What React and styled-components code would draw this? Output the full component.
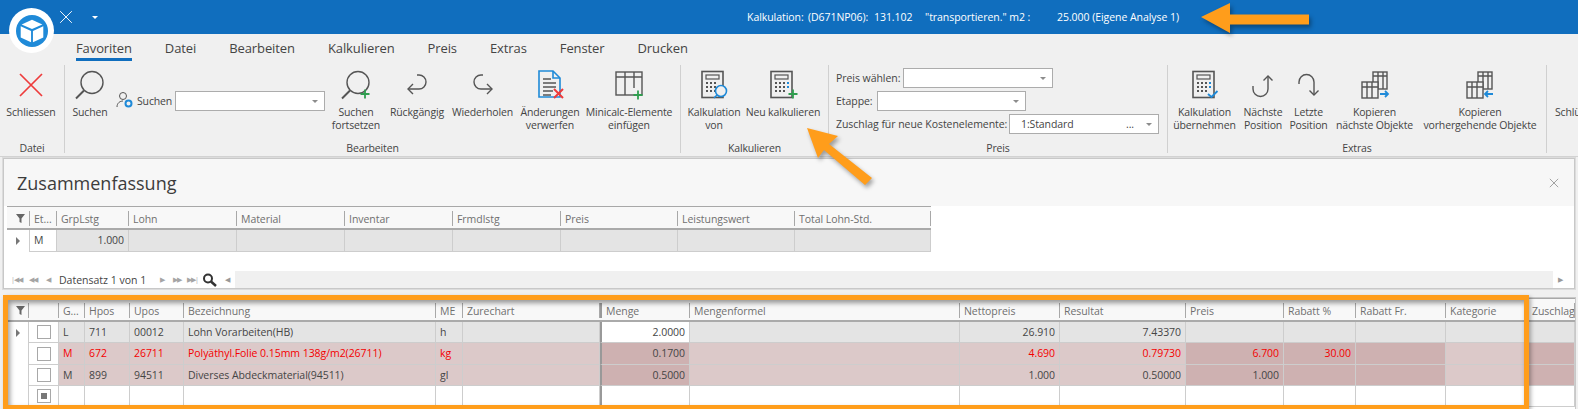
import styled, { createGlobalStyle } from "styled-components";

const GlobalStyle = createGlobalStyle`
  html, body {
    margin: 0;
    padding: 0;
    background: #f0f0f0;
    overflow: hidden;
  }
  * { box-sizing: border-box; }
`;

const blue = "#106ebe";
const iconBlue = "#1f8ad8";
const grey = "#555555";
const green = "#2f9e4f";
const red = "#ee3b3b";
const font = `"Open Sans", "Noto Sans", sans-serif`;

const Page = styled.div`
  position: relative;
  width: 1578px;
  height: 409px;
  overflow: hidden;
  font-family: ${font};
  color: #444;
  background: #f0f0f0;
`;

const TitleBar = styled.div`
  height: 34px;
  background: ${blue};
  display: flex;
  align-items: center;
  color: #fff;
  padding-left: 59px;
`;

const QuickButton = styled.div`
  width: ${(p) => p.$w}px;
  display: flex;
  align-items: center;
`;

const TitleInfo = styled.div`
  margin-left: 645px;
  display: flex;
  font-size: 10.5px;
  letter-spacing: -0.05px;
  white-space: pre;
`;

const TitleText = styled.span`
  width: ${(p) => p.$w}px;
`;

const LogoCircle = styled.div`
  position: absolute;
  left: 9px;
  top: 8px;
  width: 45px;
  height: 45px;
  border-radius: 50%;
  background: #fff;
  display: flex;
  align-items: center;
  justify-content: center;
`;

const Tabs = styled.div`
  height: 28px;
  display: flex;
  gap: 33px;
  padding-left: 76px;
  font-size: 13px;
  letter-spacing: -0.1px;
`;

const Tab = styled.div`
  height: 27px;
  padding-top: 5px;
  line-height: 18px;
  border-bottom: ${(p) => (p.$active ? `3px solid ${blue}` : "none")};
`;

const Ribbon = styled.div`
  height: 95px;
  padding: 3px 0;
  display: flex;
  border-bottom: 1px solid #d2d2d2;
`;

const Group = styled.div`
  width: ${(p) => p.$w}px;
  flex: none;
  display: flex;
  flex-direction: column;
  border-right: ${(p) => (p.$last ? "none" : "1px solid #d0d0d0")};
`;

const GroupBody = styled.div`
  flex: 1;
  display: flex;
`;

const GroupLabel = styled.div`
  height: 15px;
  margin-bottom: -3px;
  line-height: 14px;
  text-align: center;
  font-size: 10.5px;
  letter-spacing: -0.15px;
  white-space: nowrap;
`;

const LargeButton = styled.div`
  width: ${(p) => p.$w}px;
  flex: none;
  padding-top: 5px;
  display: flex;
  flex-direction: column;
  align-items: center;
  font-size: 10.5px;
  letter-spacing: -0.15px;
  line-height: 13.4px;
  text-align: center;
  white-space: pre;
`;

const ClippedButton = styled(LargeButton)`
  align-items: flex-start;
  padding-left: 8px;
  overflow: hidden;
`;

const IconBox = styled.div`
  height: 30px;
  margin-bottom: 6px;
  display: flex;
  align-items: center;
  justify-content: center;
`;

const SearchStack = styled.div`
  width: 212px;
  flex: none;
  padding: 26px 0 0 1px;
  display: flex;
  align-items: flex-start;
  font-size: 10.5px;
  letter-spacing: -0.15px;
`;

const SearchLabel = styled.span`
  width: 37.5px;
  margin: 3px 0 0 3px;
`;

const Combo = styled.div`
  width: ${(p) => p.$w}px;
  height: 20px;
  flex: none;
  background: #fff;
  border: 1px solid #acacac;
  display: flex;
  align-items: center;
  justify-content: flex-end;
  padding: 0 6px;
  font-size: 10.5px;
  letter-spacing: -0.1px;
`;

const ComboValue = styled.span`
  flex: 1;
  padding-left: 5px;
`;

const ComboDots = styled.span`
  margin-right: 12px;
`;

const Caret = styled.span`
  width: 0;
  height: 0;
  border-left: 3px solid transparent;
  border-right: 3px solid transparent;
  border-top: 3px solid #8c8c8c;
`;

const FormStack = styled.div`
  padding: 3px 0 0 7px;
  display: flex;
  flex-direction: column;
  gap: 3px;
  font-size: 10.5px;
  letter-spacing: -0.05px;
`;

const FormRow = styled.div`
  height: 20px;
  display: flex;
  align-items: center;
`;

const FormLabel = styled.span`
  width: ${(p) => p.$w}px;
  flex: none;
  white-space: nowrap;
`;

const Panel = styled.div`
  margin: 1px 3px 0 3px;
  height: 131px;
  background: #fff;
  border: 1px solid #c8c8c8;
  outline: 1px solid #dcdcdc;
`;

const PanelHead = styled.div`
  height: 47px;
  background: #f7f7f7;
  display: flex;
  align-items: center;
  justify-content: space-between;
  padding: 0 15px 0 13px;
  font-size: 18px;
  color: #3c3c3c;
`;

const GridWrap = styled.div`
  margin-left: ${(p) => p.$left}px;
  width: ${(p) => p.$w}px;
`;

const GridRow = styled.div`
  display: grid;
  grid-template-columns: ${(p) => p.$cols};
  height: ${(p) => p.$h}px;
  font-size: 10.5px;
  letter-spacing: -0.05px;
`;

const HeaderRow = styled(GridRow)`
  background: #f8f8f8;
  border-top: 1px solid #a8a8a8;
  border-bottom: 2px solid #aaaaaa;
  padding-top: 2px;
  color: #6f6f6f;
`;

const HeaderCell = styled.div`
  margin: 2px 0;
  padding-left: 4px;
  line-height: 16px;
  border-right: 1px solid #a8a8a8;
  border-left: ${(p) => (p.$thick ? "2px solid #999" : "none")};
  overflow: hidden;
  white-space: nowrap;
  display: flex;
  align-items: center;
  justify-content: ${(p) => (p.$center ? "center" : "flex-start")};
`;

const rowColors = {
  white: "#ffffff",
  grey: "#e4e4e4",
  pink: "#dcc9c9",
  dark: "#ceb1b1",
};

const Cell = styled.div`
  background: ${(p) => rowColors[p.$tone || "white"]};
  color: ${(p) => (p.$red ? "#f40000" : "#454545")};
  text-align: ${(p) => (p.$right ? "right" : "left")};
  padding: 0 4px;
  line-height: ${(p) => p.$h}px;
  border-right: 1px solid #cdcdcd;
  border-bottom: 1px solid #cdcdcd;
  border-left: ${(p) => (p.$thick ? "2px solid #999" : "none")};
  white-space: nowrap;
  overflow: hidden;
`;

const MarkerCell = styled.div`
  display: flex;
  align-items: center;
  justify-content: center;
  border-bottom: ${(p) => (p.$plain ? "none" : "1px solid #cdcdcd")};
  border-right: 1px solid #cdcdcd;
  background: #fff;
`;

const RowArrow = styled.span`
  width: 0;
  height: 0;
  border-top: 4px solid transparent;
  border-bottom: 4px solid transparent;
  border-left: 4px solid #777;
`;

const CheckBox = styled.span`
  width: 14px;
  height: 14px;
  border: 1px solid #a8a8a8;
  background: #fff;
  display: flex;
  align-items: center;
  justify-content: center;
`;

const CheckDot = styled.span`
  width: 6px;
  height: 6px;
  background: #777;
`;

const SummaryBlank = styled.div`
  height: 19px;
`;

const NavBar = styled.div`
  height: 17px;
  display: flex;
  align-items: center;
  padding-left: 7px;
  font-size: 10.5px;
`;

const NavGlyph = styled.span`
  width: ${(p) => p.$w}px;
  font-size: 7px;
  color: #a5a5a5;
  letter-spacing: -1px;
`;

const NavText = styled.span`
  width: 101px;
`;

const ScrollBar = styled.div`
  flex: 1;
  height: 17px;
  margin: 0 6px 0 3px;
  background: #f0f0f0;
  display: flex;
  justify-content: space-between;
`;

const ScrollEnd = styled.span`
  width: 15px;
  background: #fff;
  color: #999;
  font-size: 7px;
  line-height: 17px;
  text-align: center;
`;

const MainGrid = styled.div`
  margin: 9px 0 0 8px;
  width: 1567px;
  height: 112px;
  background: #fff;
  outline: 1px solid #c8c8c8;
`;

const OrangeFrame = styled.div`
  position: absolute;
  left: 3px;
  top: 295px;
  width: 1526px;
  height: 115px;
  border: 5.5px solid #ff9d1b;
  box-shadow: 2px 2px 4px rgba(0, 0, 0, 0.3), inset 2px 3px 5px rgba(0, 0, 0, 0.4);
  pointer-events: none;
`;

const ArrowSvg = styled.svg`
  position: absolute;
  left: ${(p) => p.$x}px;
  top: ${(p) => p.$y}px;
  filter: drop-shadow(2px 3px 2px rgba(0, 0, 0, 0.35));
`;

const Stroke = ({ children }) => (
  <svg width="30" height="30" viewBox="0 0 30 30" fill="none" stroke={grey} strokeWidth="1.4">
    {children}
  </svg>
);

const Plus = ({ x, y, color = green }) => (
  <path d={`M${x - 4.5} ${y}h9M${x} ${y - 4.5}v9`} stroke={color} strokeWidth="1.8" />
);

const CloseIcon = () => (
  <Stroke>
    <path d="M4 4L26 26M26 4L4 26" stroke={red} strokeWidth="1.7" />
  </Stroke>
);

const SearchIcon = ({ plus }) => (
  <Stroke>
    <circle cx="17" cy="12.500" r="11" />
    <path d="M9 20.500L1 28.500" strokeWidth="1.9" />
    {plus && <Plus x={24} y={24} />}
  </Stroke>
);

const UndoIcon = () => (
  <Stroke>
    <path d="M15 5h2a7 7 0 0 1 0 14H6" />
    <path d="M11 14l-5 5 5 5" />
  </Stroke>
);

const RedoIcon = () => (
  <Stroke>
    <path d="M15 5h-2a7 7 0 0 0 0 14h11" />
    <path d="M19 14l5 5-5 5" />
  </Stroke>
);

const DiscardIcon = () => (
  <svg width="30" height="30" viewBox="0 0 30 30" fill="none">
    <path d="M4 1h14l7 7v19H4z" stroke={iconBlue} strokeWidth="1.6" />
    <path d="M18 1v7h7" stroke={iconBlue} strokeWidth="1.6" />
    <path d="M8 9h8M8 13h13M8 17h13M8 21h10M8 25h8" stroke={grey} strokeWidth="1.4" />
    <path d="M19 19l9 9M28 19l-9 9" stroke={red} strokeWidth="2" />
  </svg>
);

const TableIcon = () => (
  <Stroke>
    <rect x="2" y="2" width="26" height="23" />
    <path d="M2 7h26M11 2v23M20 2v16" />
    <Plus x={24} y={25} />
  </Stroke>
);

const CalcBody = () => (
  <>
    <rect x="3" y="1.500" width="21" height="26" strokeWidth="1.6" />
    <rect x="7" y="5" width="13" height="4" strokeWidth="1.2" />
    <path d="M7 13h2M11 13h2M15 13h2M7 17h2M11 17h2M15 17h2M7 21h2M11 21h2M15 21h2" strokeWidth="2" />
  </>
);

const CalcSearchIcon = () => (
  <Stroke>
    <CalcBody />
    <circle cx="22" cy="21" r="5.500" stroke={iconBlue} fill="#f0f0f0" strokeWidth="1.6" />
    <path d="M18 25l-3 3" stroke={iconBlue} strokeWidth="1.6" />
  </Stroke>
);

const CalcPlusIcon = () => (
  <Stroke>
    <CalcBody />
    <path d="M19 13h2M19 17h2" stroke={iconBlue} strokeWidth="2" />
    <Plus x={25} y={24} />
  </Stroke>
);

const CalcCheckIcon = () => (
  <Stroke>
    <CalcBody />
    <path d="M19 13h2M19 17h2" stroke={iconBlue} strokeWidth="2" />
    <path d="M18 24l3.500 3 6-6" stroke={iconBlue} strokeWidth="1.8" />
  </Stroke>
);

const NextIcon = () => (
  <Stroke>
    <path d="M20 6v13a7.500 7.500 0 0 1-15 0v-3" />
    <path d="M15.500 10.500L20 6l4.500 4.500" />
  </Stroke>
);

const PrevIcon = () => (
  <Stroke>
    <path d="M5 14v-2a7.500 7.500 0 0 1 15 0v13" />
    <path d="M15.500 20.500L20 25l4.500-4.500" />
  </Stroke>
);

const CopyIcon = ({ dir }) => (
  <Stroke>
    <rect x="13" y="2" width="14" height="17" fill="#f0f0f0" />
    <path d="M13 6h14M18 2v17M23 2v17" />
    <rect x="2" y="12" width="16" height="16" fill="#f0f0f0" />
    <path d="M2 17h16M7 12v16M12 12v16" />
    {dir === "right" ? (
      <path d="M20 24h8M25 21l3 3-3 3" stroke={iconBlue} strokeWidth="1.8" />
    ) : (
      <path d="M28 24h-8M23 21l-3 3 3 3" stroke={iconBlue} strokeWidth="1.8" />
    )}
  </Stroke>
);

const UserGearIcon = () => (
  <svg width="18" height="18" viewBox="0 0 18 18" fill="none">
    <circle cx="7" cy="5" r="3.500" stroke={grey} />
    <path d="M1 16c0-4 3-6 6-6" stroke={grey} />
    <circle cx="12.500" cy="12.500" r="3" stroke={iconBlue} strokeWidth="2" />
  </svg>
);

const Logo = () => (
  <svg width="32" height="32" viewBox="0 0 34 34">
    <circle cx="17" cy="17" r="17" fill={iconBlue} />
    <path d="M17 5l11 5-11 5-11-5z" fill="#fff" />
    <path d="M5 12l11 5v12l-11-5zM29 12l-11 5v12l11-5z" fill="#fff" />
  </svg>
);

const SmallX = ({ size, color }) => (
  <svg width={size} height={size} viewBox="0 0 12 12" fill="none" stroke={color} strokeWidth="0.8">
    <path d="M1 1l10 10M11 1L1 11" />
  </svg>
);

const FunnelIcon = () => (
  <svg width="9" height="9" viewBox="0 0 9 9">
    <path d="M0 0h9L5.500 4.500V9L3.500 8V4.500z" fill="#666" />
  </svg>
);

const LensIcon = () => (
  <svg width="15" height="14" viewBox="0 0 15 14" fill="none" stroke="#333">
    <circle cx="6" cy="5.500" r="4" strokeWidth="2" />
    <path d="M9 8.500l5 4.500" strokeWidth="2.500" />
  </svg>
);

const summaryCols = "23px 27px 72px 108px 108px 108px 108px 117px 117px 136px";
const summaryHeads = ["Et...", "GrpLstg", "Lohn", "Material", "Inventar", "Frmdlstg", "Preis", "Leistungswert", "Total Lohn-Std."];

const mainCols = "21px 30px 26px 45px 54px 252px 27px 137px 90px 270px 100px 126px 98px 72px 90px 82px 47px";
const mainHeads = ["G...", "Hpos", "Upos", "Bezeichnung", "ME", "Zurechart", "Menge", "Mengenformel", "Nettopreis", "Resultat", "Preis", "Rabatt %", "Rabatt Fr.", "Kategorie", "Zuschlag"];

// text, tone, right aligned
const mainRows = [
  {
    arrow: true,
    h: 21,
    cells: [
      ["L", "grey"], ["711", "grey"], ["00012", "grey"], ["Lohn Vorarbeiten(HB)", "grey"], ["h", "grey"], ["", "grey"],
      ["2.0000", "white", true], ["", "grey"], ["26.910", "grey", true], ["7.43370", "grey", true],
      ["", "grey"], ["", "grey"], ["", "grey"], ["", "grey"], ["", "grey"],
    ],
  },
  {
    red: true,
    h: 22,
    cells: [
      ["M", "pink"], ["672", "pink"], ["26711", "pink"], ["Polyäthyl.Folie 0.15mm 138g/m2(26711)", "pink"], ["kg", "pink"], ["", "pink"],
      ["0.1700", "dark", true], ["", "pink"], ["4.690", "pink", true], ["0.79730", "pink", true],
      ["6.700", "dark", true], ["30.00", "dark", true], ["", "dark"], ["", "pink"], ["", "dark"],
    ],
  },
  {
    h: 21,
    cells: [
      ["M", "pink"], ["899", "pink"], ["94511", "pink"], ["Diverses Abdeckmaterial(94511)", "pink"], ["gl", "pink"], ["", "pink"],
      ["0.5000", "dark", true], ["", "pink"], ["1.000", "pink", true], ["0.50000", "pink", true],
      ["1.000", "dark", true], ["", "dark"], ["", "dark"], ["", "pink"], ["", "dark"],
    ],
  },
];

const MENGE = 6;

const App = () => {
  return (
    <Page>
      <GlobalStyle />
      <TitleBar>
        <QuickButton $w={33}>
          <SmallX size={14} color="#ffffff" />
        </QuickButton>
        <QuickButton $w={10}>
          <svg width="6" height="3" viewBox="0 0 6 3">
            <path d="M0 0h6L3 3z" fill="#fff" />
          </svg>
        </QuickButton>
        <TitleInfo>
          <TitleText $w={61}>Kalkulation:</TitleText>
          <TitleText $w={66}>(D671NP06):</TitleText>
          <TitleText $w={51}>131.102</TitleText>
          <TitleText $w={132}>"transportieren." m2 :</TitleText>
          <TitleText>25.000 (Eigene Analyse 1)</TitleText>
        </TitleInfo>
      </TitleBar>
      <LogoCircle>
        <Logo />
      </LogoCircle>
      <Tabs>
        <Tab $active>Favoriten</Tab>
        <Tab>Datei</Tab>
        <Tab>Bearbeiten</Tab>
        <Tab>Kalkulieren</Tab>
        <Tab>Preis</Tab>
        <Tab>Extras</Tab>
        <Tab>Fenster</Tab>
        <Tab>Drucken</Tab>
      </Tabs>
      <Ribbon>
        <Group $w={65}>
          <GroupBody>
            <LargeButton $w={62}>
              <IconBox><CloseIcon /></IconBox>
              Schliessen
            </LargeButton>
          </GroupBody>
          <GroupLabel>Datei</GroupLabel>
        </Group>
        <Group $w={616}>
          <GroupBody>
            <LargeButton $w={50}>
              <IconBox><SearchIcon /></IconBox>
              Suchen
            </LargeButton>
            <SearchStack>
              <UserGearIcon />
              <SearchLabel>Suchen</SearchLabel>
              <Combo $w={150}><Caret /></Combo>
            </SearchStack>
            <LargeButton $w={58}>
              <IconBox><SearchIcon plus /></IconBox>
              {"Suchen\nfortsetzen"}
            </LargeButton>
            <LargeButton $w={64}>
              <IconBox><UndoIcon /></IconBox>
              Rückgängig
            </LargeButton>
            <LargeButton $w={67}>
              <IconBox><RedoIcon /></IconBox>
              Wiederholen
            </LargeButton>
            <LargeButton $w={68}>
              <IconBox><DiscardIcon /></IconBox>
              {"Änderungen\nverwerfen"}
            </LargeButton>
            <LargeButton $w={90}>
              <IconBox><TableIcon /></IconBox>
              {"Minicalc-Elemente\neinfügen"}
            </LargeButton>
          </GroupBody>
          <GroupLabel>Bearbeiten</GroupLabel>
        </Group>
        <Group $w={148}>
          <GroupBody>
            <LargeButton $w={66}>
              <IconBox><CalcSearchIcon /></IconBox>
              {"Kalkulation\nvon"}
            </LargeButton>
            <LargeButton $w={72}>
              <IconBox><CalcPlusIcon /></IconBox>
              Neu kalkulieren
            </LargeButton>
          </GroupBody>
          <GroupLabel>Kalkulieren</GroupLabel>
        </Group>
        <Group $w={339}>
          <FormStack>
            <FormRow>
              <FormLabel $w={67}>Preis wählen:</FormLabel>
              <Combo $w={150}><Caret /></Combo>
            </FormRow>
            <FormRow>
              <FormLabel $w={41}>Etappe:</FormLabel>
              <Combo $w={149}><Caret /></Combo>
            </FormRow>
            <FormRow>
              <FormLabel $w={173}>Zuschlag für neue Kostenelemente:</FormLabel>
              <Combo $w={150}>
                <ComboValue>1:Standard</ComboValue>
                <ComboDots>...</ComboDots>
                <Caret />
              </Combo>
            </FormRow>
          </FormStack>
          <GroupBody />
          <GroupLabel>Preis</GroupLabel>
        </Group>
        <Group $w={379}>
          <GroupBody>
            <LargeButton $w={73}>
              <IconBox><CalcCheckIcon /></IconBox>
              {"Kalkulation\nübernehmen"}
            </LargeButton>
            <LargeButton $w={44}>
              <IconBox><NextIcon /></IconBox>
              {"Nächste\nPosition"}
            </LargeButton>
            <LargeButton $w={47}>
              <IconBox><PrevIcon /></IconBox>
              {"Letzte\nPosition"}
            </LargeButton>
            <LargeButton $w={85}>
              <IconBox><CopyIcon dir="right" /></IconBox>
              {"Kopieren\nnächste Objekte"}
            </LargeButton>
            <LargeButton $w={126}>
              <IconBox><CopyIcon dir="left" /></IconBox>
              {"Kopieren\nvorhergehende Objekte"}
            </LargeButton>
          </GroupBody>
          <GroupLabel>Extras</GroupLabel>
        </Group>
        <Group $w={31} $last>
          <GroupBody>
            <ClippedButton $w={31}>
              <IconBox />
              Schlüssel
            </ClippedButton>
          </GroupBody>
        </Group>
      </Ribbon>

      <Panel>
        <PanelHead>
          Zusammenfassung
          <SmallX size={10} color="#777777" />
        </PanelHead>
        <GridWrap $left={3} $w={924}>
          <HeaderRow $cols={summaryCols} $h={24}>
            <HeaderCell $center><FunnelIcon /></HeaderCell>
            {summaryHeads.map((head) => (
              <HeaderCell key={head}>{head}</HeaderCell>
            ))}
          </HeaderRow>
          <GridRow $cols={summaryCols} $h={22}>
            <MarkerCell $plain><RowArrow /></MarkerCell>
            <Cell $h={21}>M</Cell>
            <Cell $h={21} $tone="grey" $right>1.000</Cell>
            {summaryHeads.slice(2).map((head) => (
              <Cell key={head} $h={21} $tone="grey" />
            ))}
          </GridRow>
        </GridWrap>
        <SummaryBlank />
        <NavBar>
          <NavGlyph $w={18}>|◀◀</NavGlyph>
          <NavGlyph $w={17}>◀◀</NavGlyph>
          <NavGlyph $w={13}>◀</NavGlyph>
          <NavText>Datensatz 1 von 1</NavText>
          <NavGlyph $w={13}>▶</NavGlyph>
          <NavGlyph $w={14}>▶▶</NavGlyph>
          <NavGlyph $w={15}>▶▶|</NavGlyph>
          <LensIcon />
          <ScrollBar>
            <ScrollEnd>◀</ScrollEnd>
            <ScrollEnd>▶</ScrollEnd>
          </ScrollBar>
        </NavBar>
      </Panel>

      <MainGrid>
        <HeaderRow $cols={mainCols} $h={24}>
          <HeaderCell $center><FunnelIcon /></HeaderCell>
          <HeaderCell />
          {mainHeads.map((head, c) => (
            <HeaderCell key={head} $thick={c === MENGE}>{head}</HeaderCell>
          ))}
        </HeaderRow>
        {mainRows.map((row, r) => (
          <GridRow key={r} $cols={mainCols} $h={row.h}>
            <MarkerCell $plain>{row.arrow && <RowArrow />}</MarkerCell>
            <MarkerCell><CheckBox /></MarkerCell>
            {row.cells.map(([text, tone, right], c) => (
              <Cell
                key={c}
                $h={row.h - 1}
                $tone={tone}
                $right={right}
                $red={row.red && c !== MENGE}
                $thick={c === MENGE}
              >
                {text}
              </Cell>
            ))}
          </GridRow>
        ))}
        <GridRow $cols={mainCols} $h={21}>
          <MarkerCell $plain />
          <MarkerCell><CheckBox><CheckDot /></CheckBox></MarkerCell>
          {mainHeads.map((head, c) => (
            <Cell key={head} $h={20} $thick={c === MENGE} />
          ))}
        </GridRow>
      </MainGrid>

      <OrangeFrame />

      <ArrowSvg $x={1199} $y={0} width="114" height="38" viewBox="0 0 114 38">
        <path d="M2 17L31 3L31 14.500L110 14.500L110 24.500L31 24.500L31 33Z" fill="#ff9d1b" />
      </ArrowSvg>
      <ArrowSvg $x={804} $y={124} width="74" height="68" viewBox="0 0 74 68">
        <path d="M3 4L34 12L25 20L68 54L61 61L20 26L14 34Z" fill="#ff9d1b" />
      </ArrowSvg>
    </Page>
  );
};

export default App;
